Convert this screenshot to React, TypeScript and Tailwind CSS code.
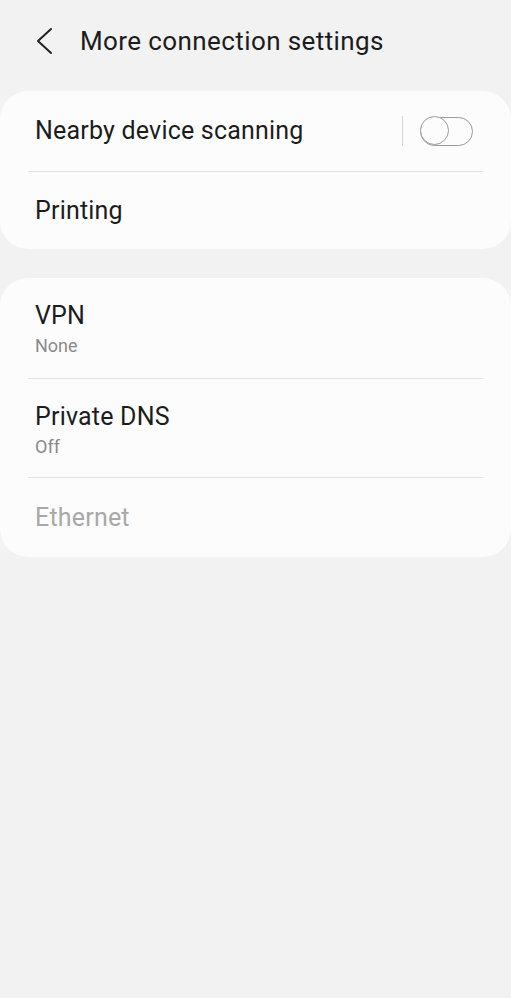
function BackIcon() {
  return (
    <svg width="18" height="28" viewBox="0 0 18 28" fill="none" className="ml-[35px] mt-[4px] text-[#222]">
      <path d="M16 2 L3 14 L16 26" stroke="currentColor" strokeWidth="2" strokeLinecap="round" strokeLinejoin="round" />
    </svg>
  );
}

function Toggle() {
  return (
    <div className="flex items-center">
      <div className="h-[30px] w-px bg-[#d6d6d6]" />
      <div className="relative ml-[17px] h-[29px] w-[53px] rounded-full border-[1.5px] border-[#9a9a9a]">
        <div className="absolute left-[-1.5px] top-[-1.5px] h-[29px] w-[29px] rounded-full border-[1.5px] border-[#9a9a9a] bg-[#fcfcfc]" />
      </div>
    </div>
  );
}

function Divider() {
  return <div className="mx-[28px] h-px bg-[#e3e3e3]" />;
}

export default function App() {
  return (
    <div className="min-h-[998px] bg-[#f2f2f2] font-['Roboto',sans-serif] text-[#1c1c1c]">
      <header className="flex h-[91px] items-start pt-[23px]">
        <BackIcon />
        <h1 className="ml-[27px] text-[26px] leading-[36px] tracking-[0.4px]">More connection settings</h1>
      </header>

      <section className="rounded-[28px] bg-[#fcfcfc]">
        <div className="flex h-[80px] items-center justify-between pl-[35px] pr-[38px]">
          <span className="text-[25px] tracking-[0.2px]">Nearby device scanning</span>
          <Toggle />
        </div>
        <Divider />
        <div className="flex h-[77px] items-center pl-[35px]">
          <span className="text-[25px] tracking-[0.2px]">Printing</span>
        </div>
      </section>

      <section className="mt-[29px] rounded-[28px] bg-[#fcfcfc]">
        <div className="flex h-[100px] flex-col pl-[35px] pt-[23px]">
          <span className="text-[25px] leading-[30px] tracking-[0.2px]">VPN</span>
          <span className="mt-[3px] text-[18px] leading-[24px] text-[#8a8a8a]">None</span>
        </div>
        <Divider />
        <div className="flex h-[98px] flex-col pl-[35px] pt-[23px]">
          <span className="text-[25px] leading-[30px] tracking-[0.2px]">Private DNS</span>
          <span className="mt-[3px] text-[18px] leading-[24px] text-[#8a8a8a]">Off</span>
        </div>
        <Divider />
        <div className="flex h-[79px] items-center pl-[35px]">
          <span className="text-[25px] tracking-[0.2px] text-[#a8a8a8]">Ethernet</span>
        </div>
      </section>
    </div>
  );
}
